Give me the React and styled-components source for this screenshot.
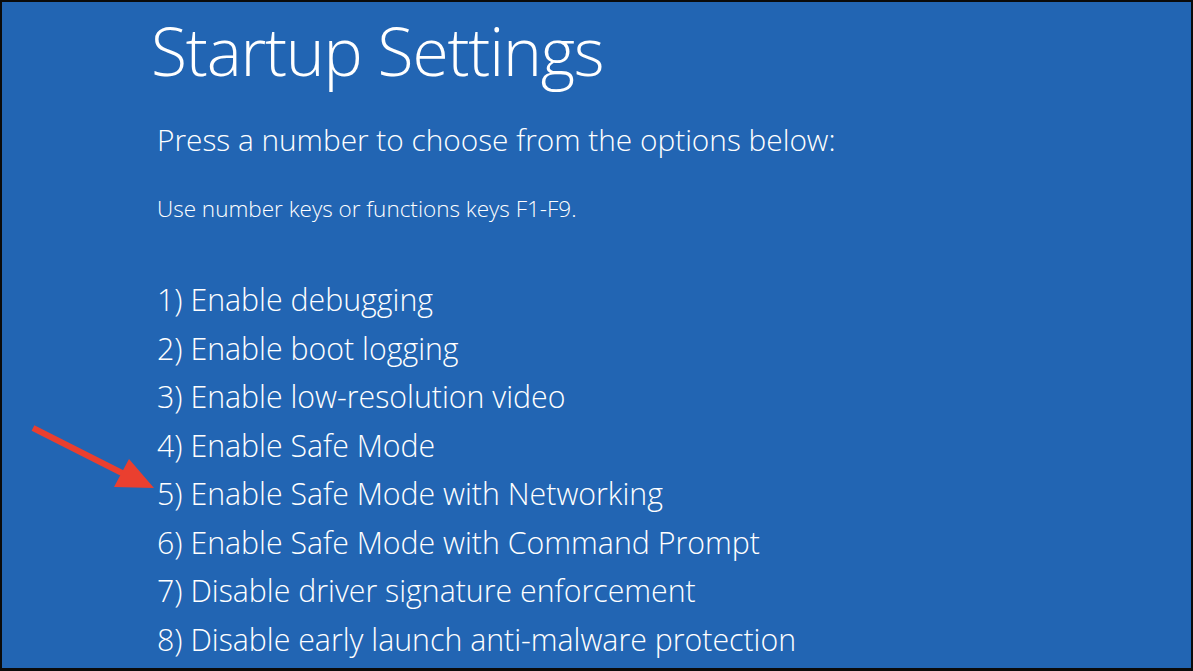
import React from "react";
import styled, { createGlobalStyle } from "styled-components";

const Global = createGlobalStyle`
  html, body { margin: 0; padding: 0; background: #000; }
  body { width: 1193px; height: 671px; overflow: hidden; }
`;

const Screen = styled.div`
  box-sizing: border-box;
  width: 1193px;
  height: 671px;
  border: 2px solid #0b0b0b;
  border-bottom-width: 3px;
  background: #2265b3;
  color: #fff;
  font-family: "Open Sans", "Noto Sans", sans-serif;
  font-weight: 300;
  position: relative;
  overflow: hidden;
`;

const Content = styled.div`
  display: flex;
  flex-direction: column;
  padding: 8px 0 0 149px;
`;

const Title = styled.h1`
  margin: 0;
  font-size: 66px;
  font-weight: 300;
  line-height: 80px;
  letter-spacing: -1.2px;
`;

const Prompt = styled.p`
  margin: 32px 0 0 6px;
  font-size: 29.8px;
  font-weight: 300;
  line-height: 36px;
  white-space: nowrap;
`;

const Hint = styled.p`
  margin: 37.5px 0 0 6px;
  font-size: 22.5px;
  font-weight: 300;
  line-height: 26px;
  white-space: nowrap;
`;

const Options = styled.ol`
  list-style: none;
  margin: 54.5px 0 0 6px;
  padding: 0;
  display: flex;
  flex-direction: column;
`;

const Option = styled.li`
  font-size: 30.3px;
  font-weight: 300;
  line-height: 48.5px;
  white-space: nowrap;
`;

const Arrow = styled.svg`
  position: absolute;
  left: 0;
  top: 0;
  pointer-events: none;
`;

const options = [
  "1) Enable debugging",
  "2) Enable boot logging",
  "3) Enable low-resolution video",
  "4) Enable Safe Mode",
  "5) Enable Safe Mode with Networking",
  "6) Enable Safe Mode with Command Prompt",
  "7) Disable driver signature enforcement",
  "8) Disable early launch anti-malware protection",
];

export default function App() {
  return (
    <>
      <Global />
      <Screen>
        <Content>
          <Title>Startup Settings</Title>
          <Prompt>Press a number to choose from the options below:</Prompt>
          <Hint>Use number keys or functions keys F1-F9.</Hint>
          <Options>
            {options.map((o) => (
              <Option key={o}>{o}</Option>
            ))}
          </Options>
        </Content>
        <Arrow width="1193" height="671" viewBox="0 0 1193 671">
          <line x1="31" y1="426" x2="122" y2="472" stroke="#ea3f2f" strokeWidth="6" strokeLinecap="butt" />
          <polygon points="152,486 127,457 112,485" fill="#ea3f2f" />
        </Arrow>
      </Screen>
    </>
  );
}
